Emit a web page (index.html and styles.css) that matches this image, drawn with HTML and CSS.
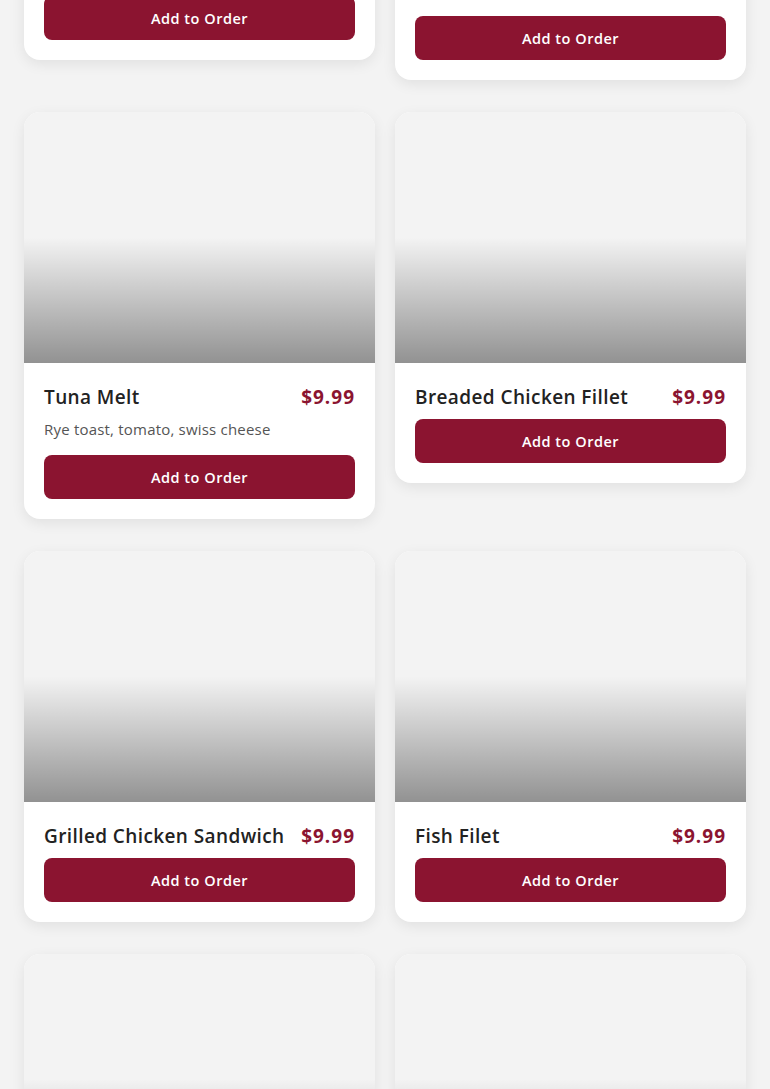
FILE: index.html
```html
<!DOCTYPE html>
<html>
<head>
  <title>Menu</title>
  <link rel="stylesheet" href="styles.css">
</head>
<body>
  <main class="menu">
    <div class="menu-grid">
      <div class="menu-card">
        <div class="menu-img"></div>
        <div class="menu-body">
          <div class="menu-head">
            <span class="menu-name">Ham &amp; Cheese</span>
            <span class="menu-price">$9.99</span>
          </div>
          <p class="menu-desc">Sourdough, ham, cheddar</p>
          <button class="add-btn">Add to Order</button>
        </div>
      </div>
      <div class="menu-card">
        <div class="menu-img"></div>
        <div class="menu-body">
          <div class="menu-head">
            <span class="menu-name">Club Sandwich</span>
            <span class="menu-price">$9.99</span>
          </div>
          <p class="menu-desc">Turkey, bacon, lettuce, tomato, mayo on toasted white bread</p>
          <button class="add-btn">Add to Order</button>
        </div>
      </div>

      <div class="menu-card">
        <div class="menu-img"></div>
        <div class="menu-body">
          <div class="menu-head">
            <span class="menu-name">Tuna Melt</span>
            <span class="menu-price">$9.99</span>
          </div>
          <p class="menu-desc">Rye toast, tomato, swiss cheese</p>
          <button class="add-btn">Add to Order</button>
        </div>
      </div>
      <div class="menu-card">
        <div class="menu-img"></div>
        <div class="menu-body">
          <div class="menu-head">
            <span class="menu-name">Breaded Chicken Fillet</span>
            <span class="menu-price">$9.99</span>
          </div>
          <button class="add-btn">Add to Order</button>
        </div>
      </div>

      <div class="menu-card">
        <div class="menu-img"></div>
        <div class="menu-body">
          <div class="menu-head">
            <span class="menu-name">Grilled Chicken Sandwich</span>
            <span class="menu-price">$9.99</span>
          </div>
          <button class="add-btn">Add to Order</button>
        </div>
      </div>
      <div class="menu-card">
        <div class="menu-img"></div>
        <div class="menu-body">
          <div class="menu-head">
            <span class="menu-name">Fish Filet</span>
            <span class="menu-price">$9.99</span>
          </div>
          <button class="add-btn">Add to Order</button>
        </div>
      </div>

      <div class="menu-card">
        <div class="menu-img"></div>
        <div class="menu-body">
          <div class="menu-head">
            <span class="menu-name">Chicken Tenders</span>
            <span class="menu-price">$9.99</span>
          </div>
          <button class="add-btn">Add to Order</button>
        </div>
      </div>
      <div class="menu-card">
        <div class="menu-img"></div>
        <div class="menu-body">
          <div class="menu-head">
            <span class="menu-name">Cheeseburger</span>
            <span class="menu-price">$9.99</span>
          </div>
          <button class="add-btn">Add to Order</button>
        </div>
      </div>
    </div>
  </main>
</body>
</html>
```

FILE: styles.css
```css
html, body {
  margin: 0;
  height: 100vh;
  overflow: hidden;
  background-color: #f3f3f3;
  font-family: "Open Sans", "Liberation Sans", sans-serif;
  color: #222;
}

.menu {
  padding: 0 24px;
}

/* page is scrolled down past the first row */
.menu-grid {
  margin-top: -347px;
  display: grid;
  grid-template-columns: 1fr 1fr;
  column-gap: 20px;
  row-gap: 32px;
  align-items: start;
}

.menu-card {
  background-color: #fff;
  border-radius: 16px;
  overflow: hidden;
  box-shadow: 0 4px 14px rgba(0, 0, 0, 0.08);
}

.menu-img {
  height: 251px;
  background-color: #f3f3f3;
  background-image: linear-gradient(to bottom, rgba(0, 0, 0, 0) 50%, rgba(0, 0, 0, 0.4) 100%);
}

.menu-body {
  padding: 20px;
  display: flex;
  flex-direction: column;
  gap: 8px;
}

.menu-head {
  display: flex;
  justify-content: space-between;
  align-items: center;
  gap: 12px;
  line-height: 28px;
}

.menu-name {
  font-size: 19px;
  font-weight: 600;
  letter-spacing: 0.4px;
  color: #222;
}

.menu-price {
  font-size: 19px;
  font-weight: 700;
  letter-spacing: 1px;
  color: #8b1430;
}

.menu-desc {
  margin: 0 0 8px 0;
  font-size: 15px;
  line-height: 20px;
  letter-spacing: 0.2px;
  color: #555;
}

.add-btn {
  height: 44px;
  border: none;
  border-radius: 8px;
  background-color: #8b1430;
  color: #fff;
  font-family: inherit;
  font-size: 14.5px;
  font-weight: 600;
  letter-spacing: 0.5px;
  cursor: pointer;
}

.add-btn:hover {
  background-color: #74102a;
}
```
